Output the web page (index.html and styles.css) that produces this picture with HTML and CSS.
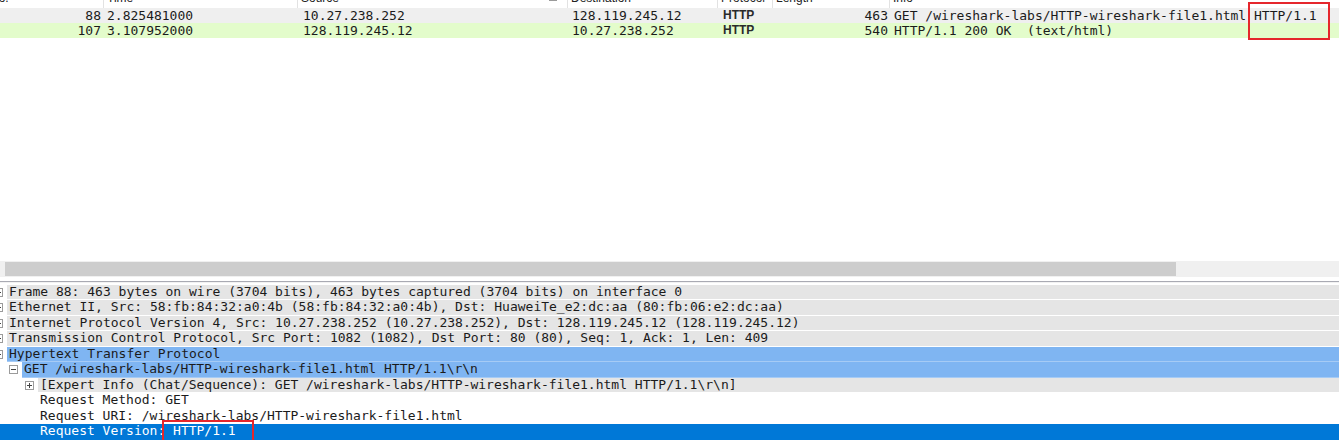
FILE: index.html
```html
<!DOCTYPE html>
<html>
<head>
<meta charset="utf-8">
<link rel="stylesheet" href="styles.css">
</head>
<body>
<div class="packet-list">
  <div class="prow header">
    <div class="c c-no"><span class="hdr-no">No.</span></div>
    <div class="c c-time">Time</div>
    <div class="c c-src">Source<span class="sort"></span></div>
    <div class="c c-dst">Destination</div>
    <div class="c c-proto">Protocol</div>
    <div class="c c-len">Length</div>
    <div class="c c-info">Info</div>
  </div>
  <div class="prow gray">
    <div class="c c-no num">88</div>
    <div class="c c-time">2.825481000</div>
    <div class="c c-src">10.27.238.252</div>
    <div class="c c-dst">128.119.245.12</div>
    <div class="c c-proto">HTTP</div>
    <div class="c c-len num">463</div>
    <div class="c c-info">GET /wireshark-labs/HTTP-wireshark-file1.html HTTP/1.1</div>
  </div>
  <div class="prow green">
    <div class="c c-no num">107</div>
    <div class="c c-time">3.107952000</div>
    <div class="c c-src">128.119.245.12</div>
    <div class="c c-dst">10.27.238.252</div>
    <div class="c c-proto">HTTP</div>
    <div class="c c-len num">540</div>
    <div class="c c-info">HTTP/1.1 200 OK&nbsp; (text/html)</div>
  </div>
</div>

<div class="hscroll"><div class="thumb"></div></div>
<div class="divider"></div>

<div class="details">
  <div class="drow l0"><span class="exp plus"></span><span class="lbl gray">Frame 88: 463 bytes on wire (3704 bits), 463 bytes captured (3704 bits) on interface 0</span></div>
  <div class="drow l0"><span class="exp plus"></span><span class="lbl gray">Ethernet II, Src: 58:fb:84:32:a0:4b (58:fb:84:32:a0:4b), Dst: HuaweiTe_e2:dc:aa (80:fb:06:e2:dc:aa)</span></div>
  <div class="drow l0"><span class="exp plus"></span><span class="lbl gray">Internet Protocol Version 4, Src: 10.27.238.252 (10.27.238.252), Dst: 128.119.245.12 (128.119.245.12)</span></div>
  <div class="drow l0"><span class="exp plus"></span><span class="lbl gray">Transmission Control Protocol, Src Port: 1082 (1082), Dst Port: 80 (80), Seq: 1, Ack: 1, Len: 409</span></div>
  <div class="drow l0"><span class="exp minus"></span><span class="lbl blue">Hypertext Transfer Protocol</span></div>
  <div class="drow l1"><span class="exp minus"></span><span class="lbl blue">GET /wireshark-labs/HTTP-wireshark-file1.html HTTP/1.1\r\n</span></div>
  <div class="drow l2"><span class="exp plus"></span><span class="lbl gray">[Expert Info (Chat/Sequence): GET /wireshark-labs/HTTP-wireshark-file1.html HTTP/1.1\r\n]</span></div>
  <div class="drow l2"><span class="exp none"></span><span class="lbl">Request Method: GET</span></div>
  <div class="drow l2"><span class="exp none"></span><span class="lbl">Request URI: /wireshark-labs/HTTP-wireshark-file1.html</span></div>
  <div class="drow l2 selected"><span class="exp none"></span><span class="lbl">Request Version: HTTP/1.1</span></div>
</div>

<div class="mark mark-top"></div>
<div class="mark mark-bottom"></div>
</body>
</html>
```
FILE: styles.css
```css
html, body {
  margin: 0;
  padding: 0;
  background: #ffffff;
  overflow: hidden;
}
body {
  width: 1339px;
  height: 440px;
  position: relative;
  font-family: "DejaVu Sans Mono", "Liberation Mono", monospace;
  font-size: 13px;
  color: #1b1b1b;
}

/* ---------- packet list ---------- */
.packet-list {
  height: 259px;
  overflow: hidden;
}
.prow {
  display: grid;
  grid-template-columns: 104px 194px 270px 150px 55px 117px 1fr;
  height: 15px;
  line-height: 15px;
  white-space: nowrap;
}
.prow.header {
  margin-top: -9px;
  height: 17px;
  line-height: 14px;
  font-family: "Liberation Sans", "DejaVu Sans", sans-serif;
  font-size: 12px;
  color: #222;
}
.prow.header .c {
  border-right: 1px solid #e2e2e2;
  padding-left: 3px;
  display: flex;
}
.prow.header .c-info { border-right: none; }
.hdr-no { margin-left: -13px; }
.sort {
  margin-left: auto;
  margin-right: 6px;
  margin-top: 9px;
  width: 8px;
  height: 1px;
  background: #9a9a9a;
}
.prow.gray { background: #efefef; }
.prow.green { background: #e3fccb; }
.c {
  padding: 0 4px;
  overflow: hidden;
}
.c.num {
  text-align: right;
  padding-right: 3px;
}
.prow .c-time { padding-left: 3px; }
.prow .c-src { padding-left: 5px; }
.prow .c-proto {
  padding-left: 5px;
  font-family: "Liberation Sans", "DejaVu Sans", sans-serif;
  font-weight: bold;
  font-size: 12px;
  color: #2a2a2a;
}
.prow.header .c-proto { font-weight: normal; }
.prow .c-len.num { padding-right: 2px; }

/* ---------- horizontal scrollbar ---------- */
.hscroll {
  margin-top: 2px;
  height: 16px;
  background: #f0f0f0;
  display: flex;
  align-items: center;
}
.thumb {
  margin-left: 5px;
  width: 1171px;
  height: 14px;
  background: #cdcdcd;
}
.divider {
  margin-top: 4px;
  height: 1px;
  background: #a9aab3;
  border-bottom: 1px solid #f2f2f2;
}

/* ---------- packet details ---------- */
.details {
  white-space: nowrap;
  padding-top: 1.5px;
}
.drow {
  display: flex;
  align-items: flex-start;
  height: 15.5px;
}
.drow.l0 { padding-left: 0; }
.drow.l0 .exp { margin-left: -6px; }
.drow.l1 { padding-left: 9px; }
.drow.l2 { padding-left: 25px; }
.exp {
  flex: none;
  width: 7px;
  height: 7px;
  margin-top: 3px;
  margin-right: 4px;
  border: 1px solid #9b9b9b;
  background: #fff;
  position: relative;
}
.exp.none { border-color: transparent; background: transparent; }
.exp.minus::before,
.exp.plus::before {
  content: "";
  position: absolute;
  left: 1px;
  top: 3px;
  width: 5px;
  height: 1px;
  background: #444;
}
.exp.plus::after {
  content: "";
  position: absolute;
  left: 3px;
  top: 1px;
  width: 1px;
  height: 5px;
  background: #444;
}
.lbl {
  flex: 1;
  height: 14.5px;
  line-height: 14.5px;
  padding-left: 2px;
  border-bottom: 1px solid #ffffff;
}
.lbl.gray { background: #e5e5e5; }
.lbl.blue { background: #7fb5f2; border-bottom-color: #a6cbf5; }
.drow.selected {
  background: #0078d7;
  color: #ffffff;
  height: 18px;
}
.drow.selected .lbl { border-bottom: none; }

/* ---------- annotation marks ---------- */
.mark {
  position: absolute;
  border: 2px solid #e5262c;
}
.mark-top {
  left: 1248px;
  top: 2px;
  width: 78px;
  height: 34px;
}
.mark-bottom {
  left: 162px;
  top: 420px;
  width: 88px;
  height: 24px;
}
```
